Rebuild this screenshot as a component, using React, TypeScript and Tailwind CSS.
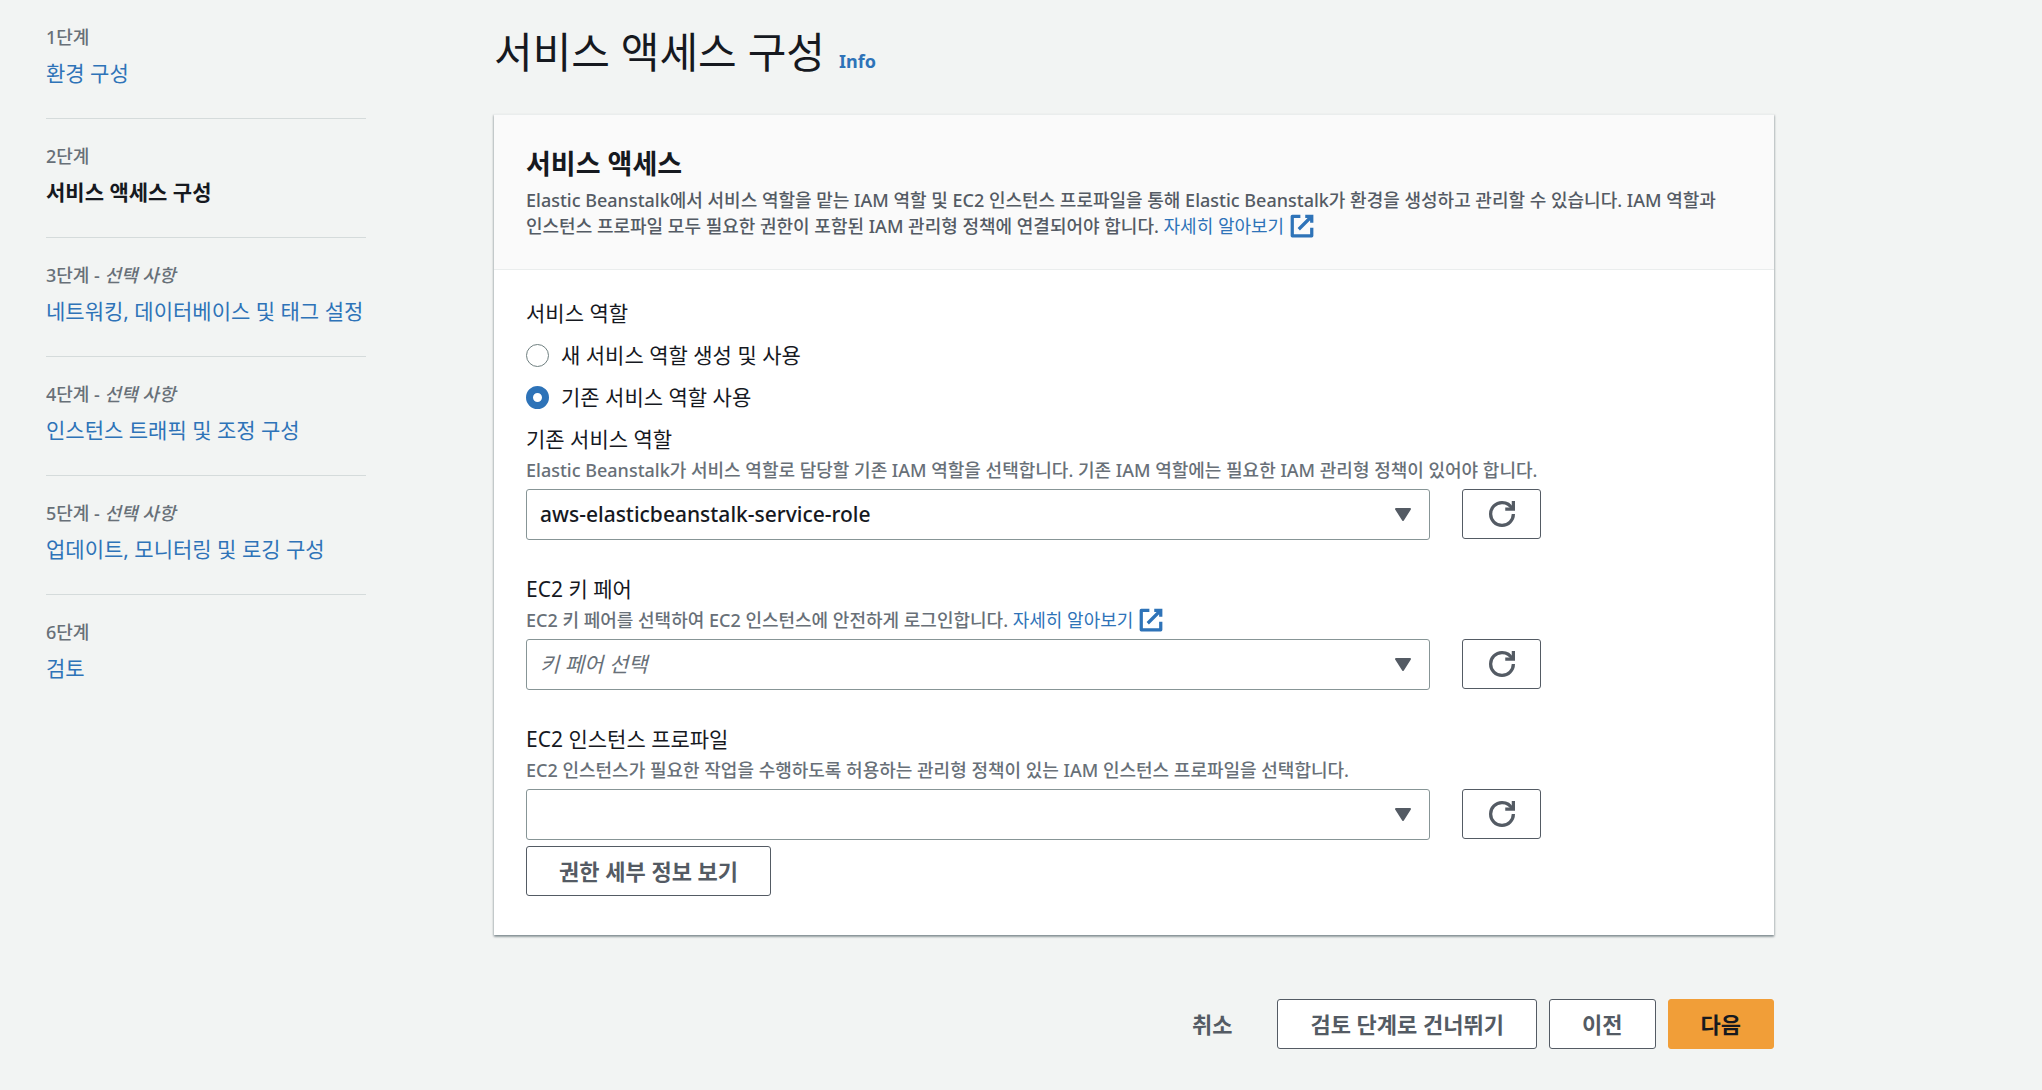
import { useState } from "react";
import type { ReactNode } from "react";

const steps = [
  { label: "1단계", title: "환경 구성" },
  { label: "2단계", title: "서비스 액세스 구성", current: true },
  { label: "3단계", title: "네트워킹, 데이터베이스 및 태그 설정", optional: true },
  { label: "4단계", title: "인스턴스 트래픽 및 조정 구성", optional: true },
  { label: "5단계", title: "업데이트, 모니터링 및 로깅 구성", optional: true },
  { label: "6단계", title: "검토" },
];

function ExternalIcon() {
  return (
    <svg viewBox="0 0 16 16" className="-my-1 inline-block size-[26px] align-[-2px]" fill="none" stroke="currentColor" strokeWidth="2" aria-hidden="true">
      <path d="M10 2h4v4M6 10l8-8" />
      <path d="M14 9.05V14H2V2h5" strokeLinejoin="round" />
    </svg>
  );
}

function RefreshButton({ label }: { label: string }) {
  return (
    <button
      type="button"
      aria-label={label}
      className="flex h-[50px] w-[79px] shrink-0 items-center justify-center rounded-[3px] border border-[#545b64] bg-white text-[#545b64]"
    >
      <svg viewBox="0 0 16 16" className="size-[26px] overflow-visible" fill="none" stroke="currentColor" strokeWidth="2" aria-hidden="true">
        <path d="M10 5h5V0" />
        <path d="M15 8a6.957 6.957 0 0 1-7 7 6.957 6.957 0 0 1-7-7 6.957 6.957 0 0 1 7-7 6.87 6.87 0 0 1 6.3 4" />
      </svg>
    </button>
  );
}

function LearnMore() {
  return (
    <a href="#learn-more" className="font-normal whitespace-nowrap text-[#2e73b8]">
      자세히 알아보기 <ExternalIcon />
    </a>
  );
}

type FieldProps = {
  id: string;
  label: string;
  description: ReactNode;
  options: string[];
  placeholder?: boolean;
};

function SelectField({ id, label, description, options, placeholder }: FieldProps) {
  return (
    <div>
      <label htmlFor={id} className="block text-[21px] leading-[35px]">
        {label}
      </label>
      <p className="mb-1.5 text-[18px] leading-[26px] font-medium text-[#687078]">{description}</p>
      <div className="flex gap-8">
        <div className="relative w-[904px]">
          <select
            id={id}
            className={`h-[51px] w-full appearance-none rounded-[3px] border border-[#879596] bg-white pr-12 pl-[13px] text-[21px] ${
              placeholder ? "text-[#687078] italic" : "font-medium text-[#16191f]"
            }`}
          >
            {options.map((option) => (
              <option key={option}>{option}</option>
            ))}
          </select>
          <svg viewBox="0 0 16 13" className="pointer-events-none absolute top-[19px] right-[19px] h-[13px] w-4 text-[#545b64]" aria-hidden="true">
            <path d="M1 1h14L8 12z" fill="currentColor" stroke="currentColor" strokeWidth="2" strokeLinejoin="round" />
          </svg>
        </div>
        <RefreshButton label={`${label} 새로 고침`} />
      </div>
    </div>
  );
}

function Button({ children, variant = "normal" }: { children: ReactNode; variant?: "normal" | "primary" | "link" }) {
  const styles = {
    normal: "border-[#545b64] bg-white text-[#545b64]",
    primary: "border-[#f19e38] bg-[#f19e38] text-[#16191f]",
    link: "border-transparent text-[#545b64]",
  };
  return (
    <button type="button" className={`h-[50px] rounded-[3px] border px-8 text-[22px] font-bold ${styles[variant]}`}>
      {children}
    </button>
  );
}

export default function App() {
  const [role, setRole] = useState("existing");

  const roles = [
    { value: "new", label: "새 서비스 역할 생성 및 사용" },
    { value: "existing", label: "기존 서비스 역할 사용" },
  ];

  return (
    <div className="flex min-h-screen items-start bg-[#f2f4f3] pr-[268px] pb-10 pl-[46px] font-['Noto_Sans','Noto_Sans_CJK_KR',sans-serif] break-keep text-[#16191f]">
      {/* Wizard steps */}
      <nav className="mr-32 w-80 shrink-0" aria-label="단계">
        <ol className="divide-y divide-[#d5dbdb]">
          {steps.map((step) => (
            <li key={step.label} className="pt-6 pb-[27px]">
              <div className="mb-1.5 text-[18px] leading-[26px] font-medium text-[#687078]">
                {step.label}
                {step.optional && (
                  <>
                    {" - "}
                    <i>선택 사항</i>
                  </>
                )}
              </div>
              {step.current ? (
                <div className="text-[21px] leading-[35px] font-bold" aria-current="step">
                  {step.title}
                </div>
              ) : (
                <a href="#step" className="block text-[21px] leading-[35px] whitespace-nowrap text-[#2e73b8]">
                  {step.title}
                </a>
              )}
            </li>
          ))}
        </ol>
      </nav>

      <main className="min-w-0 flex-1">
        <div className="flex items-baseline gap-3.5 pt-[23px] pb-[33px]">
          <h1 className="text-[42px] leading-[58px]">서비스 액세스 구성</h1>
          <a href="#info" className="text-[18px] font-bold text-[#2e73b8]">
            Info
          </a>
        </div>

        {/* Service access */}
        <section className="border-t border-[#eaeded] bg-white shadow-[0_2px_2px_0_rgba(0,28,36,0.3),1px_1px_2px_0_rgba(0,28,36,0.15),-1px_1px_2px_0_rgba(0,28,36,0.15)]">
          <header className="border-b border-[#eaeded] bg-[#fafafa] px-8 pt-[31px] pb-[30px]">
            <h2 className="mb-1.5 text-[27px] leading-[35px] font-bold">서비스 액세스</h2>
            <p className="text-[18px] leading-[26px] font-medium text-[#545b64]">
              Elastic Beanstalk에서 서비스 역할을 맡는 IAM 역할 및 EC2 인스턴스 프로파일을 통해 Elastic Beanstalk가 환경을 생성하고 관리할 수 있습니다. IAM 역할과 인스턴스 프로파일 모두 필요한 권한이 포함된 IAM 관리형 정책에 연결되어야 합니다. <LearnMore />
            </p>
          </header>

          <form className="flex flex-col px-8 pt-[26px] pb-[39px]">
            <fieldset className="mb-[7px]">
              <legend className="mb-[7px] text-[21px] leading-[35px]">서비스 역할</legend>
              <div className="flex flex-col gap-[7px]">
                {roles.map((r) => (
                  <label key={r.value} className="flex items-center gap-3 text-[21px] leading-[35px]">
                    <input
                      type="radio"
                      name="service-role"
                      value={r.value}
                      checked={role === r.value}
                      onChange={() => setRole(r.value)}
                      className="size-[23px] appearance-none rounded-full border border-[#6f7f80] bg-white checked:border-[7px] checked:border-[#2e73b8]"
                    />
                    {r.label}
                  </label>
                ))}
              </div>
            </fieldset>

            <div className="flex flex-col gap-8">
              <SelectField
                id="existing-role"
                label="기존 서비스 역할"
                description="Elastic Beanstalk가 서비스 역할로 담당할 기존 IAM 역할을 선택합니다. 기존 IAM 역할에는 필요한 IAM 관리형 정책이 있어야 합니다."
                options={["aws-elasticbeanstalk-service-role"]}
              />
              <SelectField
                id="key-pair"
                label="EC2 키 페어"
                description={
                  <>
                    EC2 키 페어를 선택하여 EC2 인스턴스에 안전하게 로그인합니다. <LearnMore />
                  </>
                }
                options={["키 페어 선택"]}
                placeholder
              />
              <SelectField
                id="instance-profile"
                label="EC2 인스턴스 프로파일"
                description="EC2 인스턴스가 필요한 작업을 수행하도록 허용하는 관리형 정책이 있는 IAM 인스턴스 프로파일을 선택합니다."
                options={[""]}
              />
            </div>

            <div className="mt-1.5">
              <Button>권한 세부 정보 보기</Button>
            </div>
          </form>
        </section>

        <div className="mt-16 flex justify-end gap-3">
          <Button variant="link">취소</Button>
          <Button>검토 단계로 건너뛰기</Button>
          <Button>이전</Button>
          <Button variant="primary">다음</Button>
        </div>
      </main>
    </div>
  );
}
